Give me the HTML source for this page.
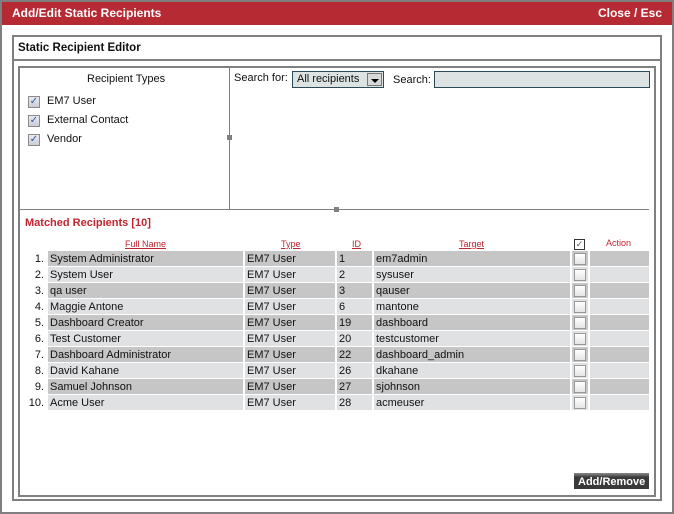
<!DOCTYPE html>
<html><head><style>
*{margin:0;padding:0;box-sizing:border-box}
body{width:674px;height:514px;position:relative;background:#fff;font-family:"Liberation Sans",Arial,sans-serif;font-size:11px;color:#111;overflow:hidden}
.a{position:absolute}
.frame{left:0;top:0;width:674px;height:514px;border:2px solid #7f7f7f}
.title{left:2px;top:2px;width:670px;height:23px;background:#b52a33;color:#fff;font-weight:bold;font-size:12px;line-height:23px;padding-left:10px}
.title span{position:absolute;right:10px;top:0}
.boxA{left:12px;top:35px;width:650px;height:466px;border:2px solid #808080}
.hdrline{left:13px;top:59px;width:648px;height:2px;background:#808080}
.boxB{left:18px;top:66px;width:638px;height:431px;border:2px solid #808080}
.cb{position:absolute;width:12px;height:12px;border:1px solid #8a8a8a;background:linear-gradient(#e8eaf0,#c9ccd6);color:#3050a0;font-size:10px;line-height:10px;text-align:center}
.row{position:absolute;left:28px;height:16px;width:621px}
.row div{position:absolute;top:0;height:15px;line-height:16px;font-size:11px}
.h{color:#c02530;text-decoration:underline;font-size:9px;position:absolute;top:239px}
.row .ck{width:12px;height:12px;border:1px solid #999;background:linear-gradient(#fff,#e4e4e4);top:2px}
</style></head><body>
<div class="a frame"></div>
<div class="a title">Add/Edit Static Recipients<span>Close / Esc</span></div>
<div class="a boxA"></div>
<div class="a" style="left:18px;top:42px;font-weight:bold;font-size:11.5px">Static Recipient Editor</div>
<div class="a hdrline"></div>
<div class="a boxB"></div>
<div class="a" style="left:229px;top:68px;width:1px;height:141px;background:#808080"></div>
<div class="a" style="left:227px;top:135px;width:5px;height:5px;background:#808080"></div>
<div class="a" style="left:20px;top:209px;width:629px;height:1px;background:#808080"></div>
<div class="a" style="left:334px;top:207px;width:5px;height:5px;background:#808080"></div>
<div class="a" style="left:87px;top:73px;font-size:11px">Recipient Types</div>
<div class="cb" style="left:28px;top:96px">✓</div><div class="a" style="left:47px;top:95px">EM7 User</div>
<div class="cb" style="left:28px;top:115px">✓</div><div class="a" style="left:47px;top:114px">External Contact</div>
<div class="cb" style="left:28px;top:134px">✓</div><div class="a" style="left:47px;top:133px">Vendor</div>
<div class="a" style="left:234px;top:72px">Search for:</div>
<div class="a" style="left:292px;top:71px;width:92px;height:17px;border:1px solid #2a4a5a;background:#dde3e3;font-size:11px;line-height:15px;padding-left:4px">All recipients</div>
<div class="a" style="left:367px;top:73px;width:15px;height:13px;background:#d8d8d8;border:1px solid #777"><div class="a" style="left:3px;top:5px;border-left:4px solid transparent;border-right:4px solid transparent;border-top:4px solid #000"></div></div>
<div class="a" style="left:393px;top:74px">Search:</div>
<div class="a" style="left:434px;top:71px;width:216px;height:17px;border:1px solid #2a4a5a;background:#dde3e3"></div>
<div class="a" style="left:25px;top:217px;color:#c02530;font-weight:bold;font-size:11px">Matched Recipients [10]</div>
<div class="h" style="left:125px">Full Name</div>
<div class="h" style="left:281px">Type</div>
<div class="h" style="left:352px">ID</div>
<div class="h" style="left:459px">Target</div>
<div class="a" style="left:574px;top:239px;width:11px;height:11px;border:1px solid #333;font-size:9px;line-height:9px;text-align:center;color:#555">✓</div>
<div class="h" style="left:606px;text-decoration:none;top:238px">Action</div>
<div id="rows"></div>
<div class="a" style="left:574px;top:473px;width:75px;height:16px;background:linear-gradient(#8a8a8a 0,#555 3px,#3a3a3a 4px,#3a3a3a);color:#fff;font-weight:bold;font-size:11px;line-height:18px;padding-left:4px;white-space:nowrap;overflow:hidden">Add/Remove</div>
<script>
var d=[["System Administrator","1","em7admin"],["System User","2","sysuser"],["qa user","3","qauser"],["Maggie Antone","6","mantone"],["Dashboard Creator","19","dashboard"],["Test Customer","20","testcustomer"],["Dashboard Administrator","22","dashboard_admin"],["David Kahane","26","dkahane"],["Samuel Johnson","27","sjohnson"],["Acme User","28","acmeuser"]];
var h="";d.forEach(function(r,i){var c=i%2?"#e0e1e3":"#c6c6c6";var y=251+i*16;
h+='<div class="row" style="top:'+y+'px">'+
'<div style="left:0;width:16px;text-align:right">'+(i+1)+'.</div>'+
'<div style="left:20px;width:195px;background:'+c+';padding-left:2px">'+r[0]+'</div>'+
'<div style="left:217px;width:90px;background:'+c+';padding-left:2px">EM7 User</div>'+
'<div style="left:309px;width:35px;background:'+c+';padding-left:2px">'+r[1]+'</div>'+
'<div style="left:346px;width:196px;background:'+c+';padding-left:2px">'+r[2]+'</div>'+
'<div style="left:544px;width:16px;background:'+c+'"></div>'+
'<div class="ck" style="left:546px"></div>'+
'<div style="left:562px;width:59px;background:'+c+'"></div></div>';});
document.getElementById("rows").innerHTML=h;
</script>
</body></html>
